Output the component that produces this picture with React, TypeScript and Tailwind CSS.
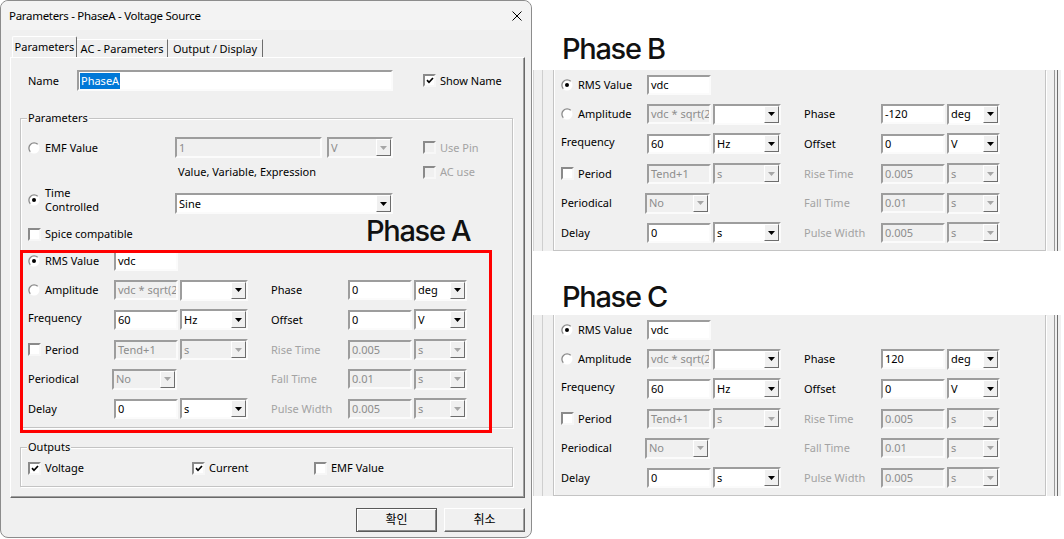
import React from "react";

const sunken =
  "border-2 border-t-[#9d9d9d] border-l-[#9d9d9d] border-r-[#fbfbfb] border-b-[#fbfbfb]";
const ROW = "h-[29.6px] flex items-center";
const DIS = "text-[#a3a3a3]";
const TITLE =
  "font-['Inter','Noto_Sans_CJK_KR',sans-serif] font-medium text-[29px] leading-[29px] tracking-[-0.045em] text-[#111]";

function Radio({ checked = false }: { checked?: boolean }) {
  return (
    <svg width="12" height="12" viewBox="0 0 12 12" className="shrink-0">
      <circle cx="6" cy="6" r="5.5" fill="#fff" />
      <path d="M2.29 9.71A5.25 5.25 0 0 1 9.71 2.29" stroke="#8a8a8a" strokeWidth="1.3" fill="none" />
      {checked && <circle cx="6" cy="6" r="2" fill="#000" />}
    </svg>
  );
}

function Check({ checked = false, disabled = false }: { checked?: boolean; disabled?: boolean }) {
  return (
    <div
      className={`w-[13px] h-[13px] shrink-0 border-2 border-t-[#8a8a8a] border-l-[#8a8a8a] border-r-[#f7f7f7] border-b-[#f7f7f7] flex items-center justify-center ${
        disabled ? "bg-[#f0f0f0]" : "bg-white"
      }`}
    >
      {checked && (
        <svg width="8" height="7" viewBox="0 0 8 7">
          <path d="M1 3.2l2 2.1L7 1" stroke="#000" strokeWidth="1.7" fill="none" />
        </svg>
      )}
    </div>
  );
}

function Edit({
  value,
  disabled = false,
  w = "w-[64px]",
  h = "h-[20px]",
}: {
  value: string;
  disabled?: boolean;
  w?: string;
  h?: string;
}) {
  return (
    <div
      className={`${sunken} ${w} ${h} shrink-0 flex items-center pl-[2px] overflow-hidden whitespace-nowrap ${
        disabled ? "bg-[#f0f0f0] text-[#8d8d8d]" : "bg-white text-black"
      }`}
    >
      {value}
    </div>
  );
}

function Combo({
  value,
  disabled = false,
  w = "w-[68px]",
  className = "",
}: {
  value: string;
  disabled?: boolean;
  w?: string;
  className?: string;
}) {
  return (
    <div
      className={`${sunken} ${w} h-[21px] shrink-0 flex ${className} ${
        disabled ? "bg-[#f0f0f0] text-[#8d8d8d]" : "bg-white text-black"
      }`}
    >
      <div className="flex-1 flex items-center pl-[2px] overflow-hidden whitespace-nowrap">{value}</div>
      <div className="w-[15px] h-full flex items-center justify-center bg-[#f0f0f0] border border-t-white border-l-white border-r-[#6d6d6d] border-b-[#6d6d6d]">
        <svg width="7" height="4" viewBox="0 0 7 4">
          <path d="M0 0h7L3.5 4z" fill={disabled ? "#a6a6a6" : "#000"} />
        </svg>
      </div>
    </div>
  );
}

function Group({
  label,
  className,
  children,
}: {
  label: string;
  className: string;
  children: React.ReactNode;
}) {
  return (
    <div className={`relative border border-[#c4c4c4] shadow-[inset_1px_1px_0_#fff,1px_1px_0_#fff] ${className}`}>
      <span className="absolute -top-[8px] left-[6px] px-[1px] bg-[#f0f0f0] leading-[14px]">{label}</span>
      {children}
    </div>
  );
}

function PhaseRows({ phase }: { phase: string }) {
  return (
    <div className="flex flex-col">
      <div className={ROW}>
        <div className="w-[93px] pl-[7px] flex items-center gap-[5px]">
          <Radio checked />
          RMS Value
        </div>
        <Edit value="vdc" />
      </div>
      <div className={ROW}>
        <div className="w-[93px] pl-[7px] flex items-center gap-[5px]">
          <Radio />
          Amplitude
        </div>
        <Edit value="vdc * sqrt(2" disabled />
        <Combo value="" className="ml-[2px]" />
        <div className="ml-[23px] w-[77px]">Phase</div>
        <Edit value={phase} />
        <Combo value="deg" w="w-[53px]" className="ml-[2px]" />
      </div>
      <div className={ROW}>
        <div className="w-[93px] pl-[7px] -mt-[4px]">Frequency</div>
        <Edit value="60" />
        <Combo value="Hz" className="ml-[2px]" />
        <div className="ml-[23px] w-[77px]">Offset</div>
        <Edit value="0" />
        <Combo value="V" w="w-[53px]" className="ml-[2px]" />
      </div>
      <div className={ROW}>
        <div className="w-[93px] pl-[7px] flex items-center gap-[4px]">
          <Check />
          Period
        </div>
        <Edit value="Tend+1" disabled />
        <Combo value="s" disabled className="ml-[2px]" />
        <div className={`ml-[23px] w-[77px] ${DIS}`}>Rise Time</div>
        <Edit value="0.005" disabled />
        <Combo value="s" disabled w="w-[53px]" className="ml-[2px]" />
      </div>
      <div className={ROW}>
        <div className="w-[93px] pl-[7px]">Periodical</div>
        <Combo value="No" disabled w="w-[65px]" className="-ml-[2px]" />
        <div className={`ml-[94px] w-[77px] ${DIS}`}>Fall Time</div>
        <Edit value="0.01" disabled />
        <Combo value="s" disabled w="w-[53px]" className="ml-[2px]" />
      </div>
      <div className={ROW}>
        <div className="w-[93px] pl-[7px]">Delay</div>
        <Edit value="0" />
        <Combo value="s" className="ml-[2px]" />
        <div className={`ml-[23px] w-[77px] ${DIS}`}>Pulse Width</div>
        <Edit value="0.005" disabled />
        <Combo value="s" disabled w="w-[53px]" className="ml-[2px]" />
      </div>
    </div>
  );
}

function Crop({ phase }: { phase: string }) {
  return (
    <div className="flex h-[181px] w-[528px] bg-[#f0f0f0] border-l border-[#d6d6d6]">
      <div className="ml-[8px] w-px h-full bg-[#cfcfcf]" />
      <div className="ml-[10px] h-[181px] w-[493px] border-l border-r border-b border-[#c4c4c4] shadow-[inset_1px_0_0_#fff,1px_1px_0_#fff]">
        <PhaseRows phase={phase} />
      </div>
      <div className="ml-[8px] w-px h-full bg-[#9a9a9a]" />
      <div className="ml-[2px] w-px h-full bg-[#6e6e6e]" />
    </div>
  );
}

function Dialog() {
  return (
    <div className="relative w-[532px] h-[538px] shrink-0 bg-[#f0f0f0] border border-[#8c8c8c] rounded-[8px] flex flex-col">
      <div className="h-[29px] flex items-center justify-between pl-[8px] pr-[9px] bg-[#f3f3f3] rounded-t-[8px] text-[11.5px] tracking-[-0.3px]">
        <span>Parameters - PhaseA - Voltage Source</span>
        <svg width="10" height="10" viewBox="0 0 10 10">
          <path d="M0.5 0.5l9 9M9.5 0.5l-9 9" stroke="#000" strokeWidth="1" />
        </svg>
      </div>

      <div className="mt-[6px] ml-[11px] h-[21px] flex items-end">
        <div className="w-[65px] h-[21px] flex items-center justify-center border-l border-t border-r border-l-white border-t-white border-r-[#6d6d6d] rounded-t-[2px]">
          Parameters
        </div>
        <div className="w-[91px] h-[18px] flex items-center justify-center border-t border-r border-t-white border-r-[#6d6d6d]">
          AC - Parameters
        </div>
        <div className="w-[95px] h-[18px] flex items-center justify-center border-t border-r border-t-white border-r-[#6d6d6d]">
          Output / Display
        </div>
      </div>

      <div className="ml-[9px] w-[515px] h-[441px] flex flex-col border border-t-white border-l-white border-r-[#696969] border-b-[#696969] shadow-[inset_-1px_-1px_0_#a0a0a0]">
        <div className="mt-[12px] h-[21px] flex items-center">
          <div className="pl-[17px] w-[66px]">Name</div>
          <div className={`${sunken} w-[316px] h-[21px] bg-white flex items-center pl-[1px]`}>
            <span className="bg-[#0078d7] text-white px-[1px] leading-[16px]">PhaseA</span>
          </div>
          <div className="ml-[30px] flex items-center gap-[4px]">
            <Check checked />
            Show Name
          </div>
        </div>

        <Group label="Parameters" className="mt-[27px] ml-[9px] w-[493px] h-[310px]">
          <div className="mt-[18px] h-[21px] flex items-center">
            <div className="w-[154px] pl-[7px] flex items-center gap-[5px]">
              <Radio />
              EMF Value
            </div>
            <Edit value="1" disabled w="w-[147px]" h="h-[21px]" />
            <Combo value="V" disabled w="w-[66px]" className="ml-[5px]" />
            <div className={`ml-[30px] flex items-center gap-[4px] ${DIS}`}>
              <Check disabled />
              Use Pin
            </div>
          </div>
          <div className="mt-[4px] h-[20px] flex items-center">
            <div className="w-[402px] pl-[157px]">Value, Variable, Expression</div>
            <div className={`flex items-center gap-[4px] ${DIS}`}>
              <Check disabled />
              AC use
            </div>
          </div>
          <div className="mt-[4px] h-[28px] flex">
            <div className="w-[154px] pl-[7px] flex items-center gap-[5px]">
              <Radio checked />
              <div className="leading-[14px]">
                Time
                <br />
                Controlled
              </div>
            </div>
            <Combo value="Sine" w="w-[218px]" className="mt-[7px]" />
          </div>
          <div className="mt-[12px] h-[16px] flex items-center pl-[7px] gap-[4px]">
            <Check />
            Spice compatible
          </div>
          <div className="mt-[4px]">
            <PhaseRows phase="0" />
          </div>
        </Group>

        <Group label="Outputs" className="mt-[19px] ml-[9px] w-[493px] h-[40px]">
          <div className="mt-[13px] h-[14px] flex items-center">
            <div className="pl-[7px] w-[171px] flex items-center gap-[4px]">
              <Check checked />
              Voltage
            </div>
            <div className="w-[122px] flex items-center gap-[4px]">
              <Check checked />
              Current
            </div>
            <div className="flex items-center gap-[4px]">
              <Check />
              EMF Value
            </div>
          </div>
        </Group>
      </div>

      <div className="mt-[10px] h-[24px] flex justify-end gap-[7px] pr-[6px] text-[12px]">
        <div className="w-[81px] h-[24px] flex items-center justify-center border border-[#5a5a5a] shadow-[inset_1px_1px_0_#fff,inset_-1px_-1px_0_#8a8a8a]">
          확인
        </div>
        <div className="w-[81px] h-[24px] flex items-center justify-center border border-t-white border-l-white border-r-[#696969] border-b-[#696969] shadow-[inset_-1px_-1px_0_#a0a0a0]">
          취소
        </div>
      </div>

      <div className="absolute left-[19px] top-[249px] w-[472px] h-[183px] border-[3px] border-[#ff0000]" />
      <div className={`absolute left-[365px] top-[215px] ${TITLE}`}>Phase A</div>
    </div>
  );
}

export default function App() {
  return (
    <div className="w-[1064px] h-[539px] bg-white flex overflow-hidden font-['Noto_Sans','Noto_Sans_CJK_KR',sans-serif] text-[11px] leading-[14px] text-black">
      <Dialog />
      <div className="ml-[1px] flex flex-col">
        <div className={`mt-[34px] ml-[29px] h-[29px] ${TITLE}`}>Phase B</div>
        <div className="mt-[7px]">
          <Crop phase="-120" />
        </div>
        <div className={`mt-[31px] ml-[29px] h-[29px] ${TITLE}`}>Phase C</div>
        <div className="mt-[4px]">
          <Crop phase="120" />
        </div>
      </div>
    </div>
  );
}
